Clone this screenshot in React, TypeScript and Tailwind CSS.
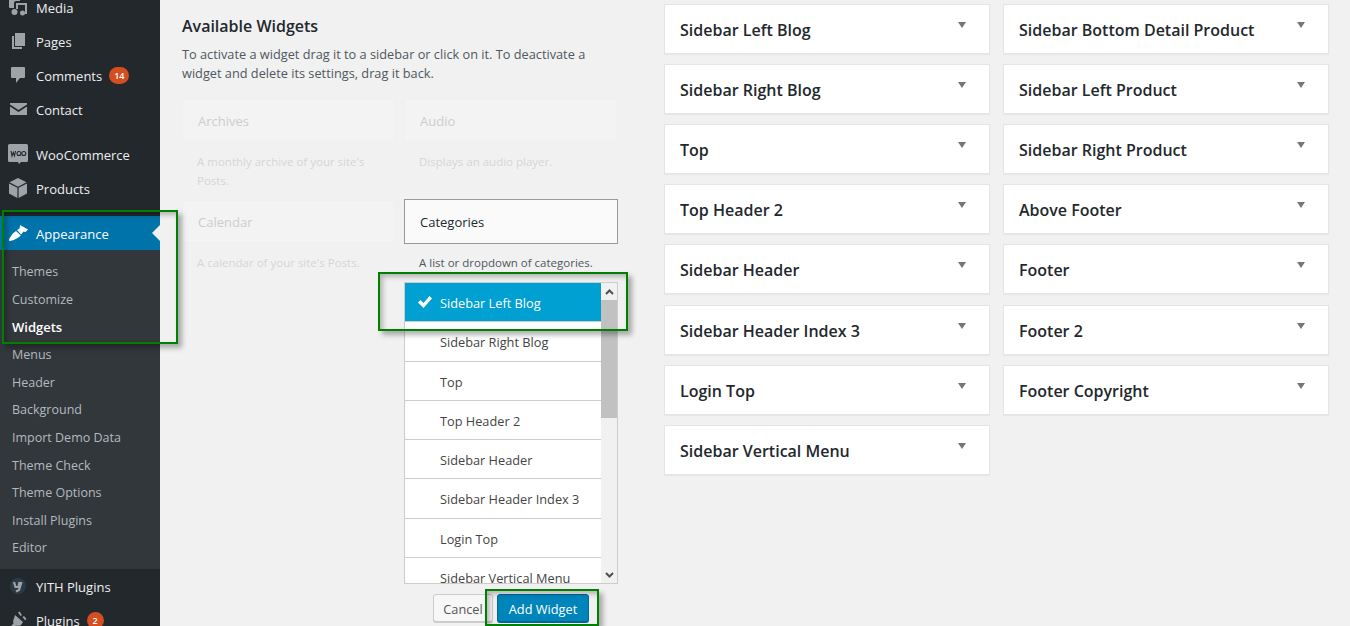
import React from 'react';

const SUBMENU = ['Themes', 'Customize', 'Widgets', 'Menus', 'Header', 'Background', 'Import Demo Data', 'Theme Check', 'Theme Options', 'Install Plugins', 'Editor'];
const DROPDOWN = ['Sidebar Left Blog', 'Sidebar Right Blog', 'Top', 'Top Header 2', 'Sidebar Header', 'Sidebar Header Index 3', 'Login Top', 'Sidebar Vertical Menu'];
const LEFT_AREAS = DROPDOWN;
const RIGHT_AREAS = ['Sidebar Bottom Detail Product', 'Sidebar Left Product', 'Sidebar Right Product', 'Above Footer', 'Footer', 'Footer 2', 'Footer Copyright'];

const MediaIcon = () => (
  <svg width="18" height="18" viewBox="0 0 18 18" fill="#9ea3a8">
    <path d="M0 0h11v3H7a2 2 0 0 0-2 2v5H1a1 1 0 0 1-1-1z" />
    <path d="M7 5h11v11h-2V7h-7v4H7z" />
    <circle cx="5.500" cy="14" r="3" />
    <circle cx="13.500" cy="15" r="2.500" />
  </svg>
);

const PagesIcon = () => (
  <svg width="14" height="17" viewBox="0 0 14 17" fill="#9ea3a8">
    <path d="M4 0h10v13H4z" />
    <path d="M1 3h2v11h8v2H1z" />
  </svg>
);

const CommentIcon = () => (
  <svg width="14" height="17" viewBox="0 0 14 17" fill="#9ea3a8">
    <path d="M1 0h12a1 1 0 0 1 1 1v9a1 1 0 0 1-1 1H9l-4 5v-5H1a1 1 0 0 1-1-1V1a1 1 0 0 1 1-1z" />
  </svg>
);

const MailIcon = () => (
  <svg width="17" height="12" viewBox="0 0 17 12" fill="#9ea3a8">
    <path d="M0 0h17v1.500L8.500 7 0 1.500z" />
    <path d="M0 3.500L8.500 9 17 3.500V12H0z" />
  </svg>
);

const WooIcon = () => (
  <svg width="20" height="20" viewBox="0 0 20 20">
    <path d="M1.500 0h17A1.500 1.500 0 0 1 20 1.500v15a1.500 1.500 0 0 1-1.500 1.500H13l-2 2-1-2H1.500A1.500 1.500 0 0 1 0 16.500v-15A1.500 1.500 0 0 1 1.500 0z" fill="#9ea3a8" />
    <path d="M3 7l1 5 1.300-3.500L6.500 12l1-5" fill="none" stroke="#23282d" strokeWidth="1.100" />
    <circle cx="11" cy="9.500" r="2" fill="none" stroke="#23282d" strokeWidth="1.100" />
    <circle cx="15.800" cy="9.500" r="2" fill="none" stroke="#23282d" strokeWidth="1.100" />
  </svg>
);

const BoxIcon = () => (
  <svg width="18" height="20" viewBox="0 0 18 20" fill="#9ea3a8">
    <path d="M9 0l8.500 4.300L9 8.700.500 4.300z" />
    <path d="M0 5.500l8.400 4.300V20L0 15.500z" />
    <path d="M18 5.500L9.600 9.800V20l8.400-4.500z" />
  </svg>
);

const BrushIcon = () => (
  <svg width="19" height="16" viewBox="0 0 19 16" fill="#fff">
    <path d="M11 0l8 4.500-2.500 2.500-2-.5-2.500 3L8 5l2.500-1.500z" />
    <path d="M7 6l4.800 4.500-2 1.800C7.500 13.800 3 16 1 16c-.6 0-1-.4-1-1 0-1.500 3-5.500 5-7.500z" />
  </svg>
);

const YithIcon = () => (
  <svg width="20" height="20" viewBox="0 0 20 20">
    <circle cx="10" cy="10" r="8" fill="#2b3a47" />
    <path d="M6 6l1.500 5h3l1-5M13.500 6l-2.500 8-3 1.500" fill="none" stroke="#9ea3a8" strokeWidth="2.200" />
  </svg>
);

const PluginIcon = () => (
  <svg width="18" height="20" viewBox="0 0 18 20" fill="#9ea3a8">
    <path d="M6 5l8 7-2 3c-1.500 1-3.500 1-5 .5L3 20H0v-2l4.500-4.500C4 12 4 10 5 8.500z" />
    <path d="M9 2.500l1.500-1L13 5l-1.500 1zM13.500 7l1.500-1 2.500 3-1.500 1.200z" />
  </svg>
);

const TopItem = ({ icon, label, badge }: { icon: React.ReactNode; label: string; badge?: string }) => (
  <div className="h-[34px] flex items-center text-[13px] text-[#eeeeee]">
    <div className="w-[36px] flex justify-center shrink-0">{icon}</div>
    <span className="pt-[4px]">{label}</span>
    {badge && (
      <span className="ml-[7px] mt-[1px] h-[17px] min-w-[17px] px-[5px] rounded-full bg-[#d54e21] text-white text-[9px] leading-[17px] text-center font-semibold">
        {badge}
      </span>
    )}
  </div>
);

const Sidebar = () => (
  <aside className="w-[160px] shrink-0 bg-[#23282d] -mt-[10px] h-[660px]">
    <TopItem icon={<MediaIcon />} label="Media" />
    <TopItem icon={<PagesIcon />} label="Pages" />
    <TopItem icon={<CommentIcon />} label="Comments" badge="14" />
    <TopItem icon={<MailIcon />} label="Contact" />
    <div className="h-[11px]" />
    <TopItem icon={<WooIcon />} label="WooCommerce" />
    <TopItem icon={<BoxIcon />} label="Products" />
    <div className="h-[11px]" />
    <div className="h-[34px] bg-[#0073aa] text-white text-[13px] flex items-center relative">
      <div className="w-[36px] flex justify-center shrink-0">
        <BrushIcon />
      </div>
      <span className="pt-[4px]">Appearance</span>
      <div className="absolute right-0 top-[9px] border-y-[8px] border-y-transparent border-r-[8px] border-r-[#f1f1f1]" />
    </div>
    <div className="bg-[#32373c] pt-[8.400px] pb-[7px] text-[12.500px]">
      {SUBMENU.map((item) => (
        <div key={item} className={`h-[27.600px] leading-[27.600px] pl-[12px] ${item === 'Widgets' ? 'text-white text-[13px] font-semibold' : 'text-[#b4b9be]'}`}>
          {item}
        </div>
      ))}
    </div>
    <TopItem icon={<YithIcon />} label="YITH Plugins" />
    <TopItem icon={<PluginIcon />} label="Plugins" badge="2" />
  </aside>
);

const GhostWidget = ({ title, desc }: { title: string; desc: string }) => (
  <div>
    <div className="h-[43px] pt-[2px] bg-[#f3f3f3] border border-[#f0f0f0] flex items-center pl-[15px] text-[13px] font-medium text-[#cdcdcd]">
      {title}
    </div>
    <p className="mt-[10px] pl-[15px] text-[11.500px] leading-[19px] text-[#d6d6d6]">{desc}</p>
  </div>
);

const AvailableWidgets = () => (
  <section className="w-[436px] shrink-0 ml-[22px] pt-[14px]">
    <h2 className="text-[16px] leading-[24px] font-semibold text-[#23282d]">Available Widgets</h2>
    <p className="mt-[7px] text-[12.750px] leading-[19px] text-[#50575e]">
      To activate a widget drag it to a sidebar or click on it. To deactivate a widget and delete its settings, drag it back.
    </p>
    <div className="mt-[16px] grid grid-cols-2 gap-x-[9px] w-[435px]">
      <div className="h-[101px]">
        <GhostWidget title="Archives" desc={"A monthly archive of your site's Posts."} />
      </div>
      <div className="h-[101px]">
        <GhostWidget title="Audio" desc="Displays an audio player." />
      </div>
      <GhostWidget title="Calendar" desc={"A calendar of your site's Posts."} />
      <div className="-mt-[1px] w-[214px]">
        <div className="h-[45px] pt-[2px] bg-[#fafafa] border border-[#999999] flex items-center pl-[15px] text-[13px] font-medium text-[#23282d]">
          Categories
        </div>
        <p className="mt-[9px] pl-[15px] text-[11.500px] leading-[19px] whitespace-nowrap text-[#50575e]">A list or dropdown of categories.</p>
        <div className="mt-[10px] h-[302px] w-[214px] bg-white border border-[#cccccc] flex overflow-hidden">
          <ul className="w-[196px] shrink-0">
            {DROPDOWN.map((item, i) => (
              <li
                key={item}
                className={`relative h-[39.250px] leading-[40px] pl-[35px] text-[12.750px] border-b border-[#cccccc] whitespace-nowrap ${i === 0 ? 'bg-[#00a0d2] text-white' : 'text-[#444444]'}`}
              >
                {i === 0 && (
                  <svg className="absolute left-[12px] top-[11px]" width="16" height="16" viewBox="0 0 16 16" fill="#fff">
                    <path d="M1 8.500l2.500-2.500 3 3L12.500 2 15 4.500 6.500 14z" />
                  </svg>
                )}
                {item}
              </li>
            ))}
          </ul>
          <div className="w-[16px] shrink-0 bg-[#f1f1f1] flex flex-col">
            <div className="h-[17px] flex items-center justify-center">
              <svg width="9" height="6" viewBox="0 0 9 6" fill="none" stroke="#505050" strokeWidth="2">
                <path d="M1 5l3.500-3.500L8 5" />
              </svg>
            </div>
            <div className="h-[118px] bg-[#c1c1c1]" />
            <div className="flex-1" />
            <div className="h-[17px] flex items-center justify-center">
              <svg width="9" height="6" viewBox="0 0 9 6" fill="none" stroke="#505050" strokeWidth="2">
                <path d="M1 1l3.500 3.500L8 1" />
              </svg>
            </div>
          </div>
        </div>
        <div className="mt-[10px] flex pl-[29px] gap-[4px]">
          <button className="w-[60px] h-[28px] pt-[4px] rounded-[3px] bg-[#f7f7f7] border border-[#cccccc] text-[12.750px] text-[#555555] shadow-[0_1px_0_#cccccc]">Cancel</button>
          <button className="w-[92px] h-[28px] pt-[4px] rounded-[3px] bg-[#0085ba] border border-[#006799] text-[12.750px] text-white shadow-[0_1px_0_#006799]">Add Widget</button>
        </div>
      </div>
    </div>
  </section>
);

const AreaCard = ({ name }: { name: string }) => (
  <div className="relative h-[50px] pt-[2px] bg-white border border-[#e5e5e5] shadow-[0_1px_1px_rgba(0,0,0,0.04)] flex items-center pl-[15px] text-[16px] font-semibold text-[#23282d]">
    {name}
    <div className="absolute right-[23px] top-[17px] border-x-[4px] border-x-transparent border-t-[6px] border-t-[#72777c]" />
  </div>
);

const AreaColumn = ({ areas }: { areas: string[] }) => (
  <div className="w-[326px] flex flex-col gap-[10.120px]">
    {areas.map((name) => (
      <AreaCard key={name} name={name} />
    ))}
  </div>
);

const Callout = ({ className }: { className: string }) => (
  <div className={`absolute border-2 border-[#008000] shadow-[4px_4px_5px_rgba(0,0,0,0.3),inset_3px_3px_5px_rgba(0,0,0,0.25)] pointer-events-none ${className}`} />
);

export default function App() {
  return (
    <div className="relative h-[626px] w-[1350px] overflow-hidden bg-[#f1f1f1] flex items-start font-['Open_Sans',sans-serif]">
      <Sidebar />
      <AvailableWidgets />
      <div className="ml-[46px] pt-[4px] flex gap-[13px]">
        <AreaColumn areas={LEFT_AREAS} />
        <AreaColumn areas={RIGHT_AREAS} />
      </div>
      <Callout className="left-[2px] top-[210px] w-[176px] h-[134px]" />
      <Callout className="left-[378px] top-[272px] w-[250px] h-[59px]" />
      <Callout className="left-[485px] top-[589px] w-[114px] h-[37px]" />
    </div>
  );
}
